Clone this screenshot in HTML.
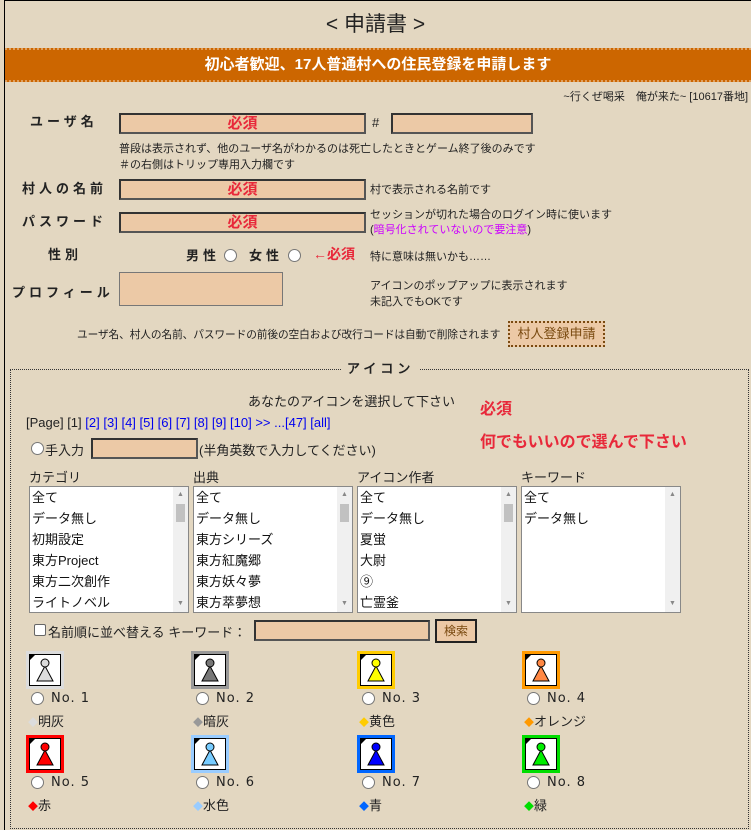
<!DOCTYPE html>
<html><head><meta charset="utf-8"><style>
*{box-sizing:border-box}
body{margin:0;width:751px;height:814px;overflow:hidden;background:#e3d7c1;font-family:"Liberation Sans","Noto Sans CJK JP",sans-serif;font-size:12px;color:#222;position:relative}
.a{position:absolute;white-space:nowrap}
.frame{position:absolute;left:4px;top:0;width:760px;height:830px;border-left:1px solid #000;border-top:1px solid #000}
.inp{position:absolute;background:#ecc9a6;border:2px solid #555;border-top-color:#333;border-left-color:#333}
.req{color:#e8283a;font-weight:bold;font-size:15px;text-align:center;line-height:16px}
.lbl{position:absolute;font-weight:bold;font-size:13px;letter-spacing:4px;font-family:"WenQuanYi Zen Hei","Noto Sans CJK JP",sans-serif}
.radio{position:absolute;width:13px;height:13px;border:1px solid #777;border-radius:50%;background:#fff}
.list{position:absolute;top:486px;width:160px;height:127px;background:#fff;border:1px solid #888;font-size:13px;line-height:21px;padding-left:2px;color:#111}
.sb{position:absolute;right:0;top:0;width:15px;height:125px;background:#f0f0f0}
.sb i{position:absolute;left:3px;top:17px;width:9px;height:18px;background:#c1c1c1}
.sb b{position:absolute;left:4px;font-size:7px;color:#888;font-weight:normal;line-height:8px}
a{color:#00e;}
.ic{position:absolute;width:38px;height:38px;border:3px solid}
.ic .w{position:absolute;left:0;top:0;width:32px;height:32px;background:#fff;border:1px solid #000}
.no{position:absolute;font-size:13px;font-family:"DejaVu Sans",sans-serif;letter-spacing:1px}
</style></head><body>
<div class="frame"></div>
<div class="a" style="left:0;width:751px;top:8px;text-align:center;font-size:21px;font-family:'WenQuanYi Zen Hei',sans-serif">&lt; 申請書 &gt;</div>
<div class="a" style="left:5px;width:746px;top:48px;height:34px;background:#cc6600;border-top:2px dotted #e0a060;border-bottom:2px dotted #e0a060;color:#fff;font-weight:bold;font-size:15px;text-align:center;line-height:30px">初心者歓迎、17人普通村への住民登録を申請します</div>
<div class="a" style="right:3px;top:88px;font-size:11px">~行くぜ喝采　俺が来た~ [10617番地]</div>

<div class="lbl" style="left:30px;top:111px">ユーザ名</div>
<div class="inp req" style="left:119px;top:113px;width:247px;height:21px;padding-top:1px">必須</div>
<div class="a" style="left:372px;top:115px;font-size:13px">#</div>
<div class="inp" style="left:391px;top:113px;width:142px;height:21px"></div>
<div class="a" style="left:119px;top:140px;font-size:11px">普段は表示されず、他のユーザ名がわかるのは死亡したときとゲーム終了後のみです</div>
<div class="a" style="left:119px;top:156px;font-size:11px">＃の右側はトリップ専用入力欄です</div>

<div class="lbl" style="left:22px;top:178px">村人の名前</div>
<div class="inp req" style="left:119px;top:179px;width:247px;height:21px;padding-top:1px">必須</div>
<div class="a" style="left:370px;top:181px;font-size:11px">村で表示される名前です</div>

<div class="lbl" style="left:22px;top:211px">パスワード</div>
<div class="inp req" style="left:119px;top:212px;width:247px;height:21px;padding-top:1px">必須</div>
<div class="a" style="left:370px;top:206px;font-size:11px">セッションが切れた場合のログイン時に使います</div>
<div class="a" style="left:370px;top:221px;font-size:11px">(<span style="color:#c0f">暗号化されていないので要注意</span>)</div>

<div class="lbl" style="left:48px;top:244px">性別</div>
<div class="lbl" style="left:186px;top:245px">男性</div>
<div class="radio" style="left:224px;top:249px"></div>
<div class="lbl" style="left:249px;top:245px">女性</div>
<div class="radio" style="left:288px;top:249px"></div>
<div class="a" style="left:313px;top:244px;color:#e8283a;font-weight:bold;font-size:14px">←必須</div>
<div class="a" style="left:370px;top:248px;font-size:11px">特に意味は無いかも……</div>

<div class="lbl" style="left:12px;top:282px">プロフィール</div>
<div class="inp" style="left:119px;top:272px;width:164px;height:34px;border:1px solid #777"></div>
<div class="a" style="left:370px;top:277px;font-size:11px">アイコンのポップアップに表示されます</div>
<div class="a" style="left:370px;top:293px;font-size:11px">未記入でもOKです</div>

<div class="a" style="left:77px;top:327px;font-size:10.7px;letter-spacing:-0.1px">ユーザ名、村人の名前、パスワードの前後の空白および改行コードは自動で削除されます</div>
<div class="a" style="left:508px;top:321px;width:97px;height:26px;background:#ecc9a6;border:2px dotted #7a4a10;color:#7a4a10;font-size:13px;text-align:center;line-height:22px">村人登録申請</div>

<div class="a" style="left:10px;top:369px;width:739px;height:460px;border:1px dotted #333"></div>
<div class="a" style="left:341px;top:358px;background:#e3d7c1;padding:0 6px;font-weight:bold;font-size:13px;letter-spacing:4px;font-family:'WenQuanYi Zen Hei',sans-serif">アイコン</div>

<div class="a" style="left:248px;top:391px;font-size:13px">あなたのアイコンを選択して下さい</div>
<div class="a" style="left:480px;top:395px;color:#e8283a;font-weight:bold;font-size:16px">必須</div>
<div class="a" style="left:26px;top:415px;font-size:13px">[Page] [1] <a>[2]</a> <a>[3]</a> <a>[4]</a> <a>[5]</a> <a>[6]</a> <a>[7]</a> <a>[8]</a> <a>[9]</a> <a>[10]</a> <a>&gt;&gt;</a> <a>...[47]</a> <a>[all]</a></div>
<div class="a" style="left:480px;top:428px;color:#e8283a;font-weight:bold;font-size:16px">何でもいいので選んで下さい</div>

<div class="radio" style="left:31px;top:442px"></div>
<div class="a" style="left:45px;top:440px;font-size:13px">手入力</div>
<div class="inp" style="left:91px;top:438px;width:107px;height:21px"></div>
<div class="a" style="left:199px;top:440px;font-size:13px">(半角英数で入力してください)</div>

<div class="a" style="left:29px;top:467px;font-size:13px">カテゴリ</div>
<div class="a" style="left:193px;top:467px;font-size:13px">出典</div>
<div class="a" style="left:357px;top:467px;font-size:13px">アイコン作者</div>
<div class="a" style="left:521px;top:467px;font-size:13px">キーワード</div>

<div class="list" style="left:29px">全て<br>データ無し<br>初期設定<br>東方Project<br>東方二次創作<br>ライトノベル<div class="sb"><b style="top:4px">▲</b><i></i><b style="top:113px">▼</b></div></div>
<div class="list" style="left:193px">全て<br>データ無し<br>東方シリーズ<br>東方紅魔郷<br>東方妖々夢<br>東方萃夢想<div class="sb"><b style="top:4px">▲</b><i></i><b style="top:113px">▼</b></div></div>
<div class="list" style="left:357px">全て<br>データ無し<br>夏蛍<br>大尉<br>⑨<br>亡霊釜<div class="sb"><b style="top:4px">▲</b><i></i><b style="top:113px">▼</b></div></div>
<div class="list" style="left:521px">全て<br>データ無し<div class="sb"><b style="top:4px">▲</b><b style="top:113px">▼</b></div></div>

<div class="a" style="left:34px;top:624px;width:12px;height:12px;border:1px solid #666;background:#fff;border-radius:2px"></div>
<div class="a" style="left:48px;top:622px;font-size:13px">名前順に並べ替える キーワード：</div>
<div class="inp" style="left:254px;top:620px;width:176px;height:21px"></div>
<div class="a" style="left:435px;top:619px;width:42px;height:24px;background:#ecc9a6;border:2px solid #222;color:#7a4a10;font-size:12px;text-align:center;line-height:20px">検索</div>

<div id="icons"></div>
<script>
var d=[[26,651,'#dcdcdc','#dcdcdc','No. 1','明灰'],[191,651,'#999','#777','No. 2','暗灰'],[357,651,'#fc0','#ff0','No. 3','黄色'],[522,651,'#f90','#f84','No. 4','オレンジ'],
[26,735,'#f00','#f00','No. 5','赤'],[191,735,'#9cf','#7cf','No. 6','水色'],[357,735,'#06f','#00f','No. 7','青'],[522,735,'#0d0','#0e0','No. 8','緑']];
var h='';
d.forEach(function(e){var x=e[0],y=e[1];
h+='<div class="ic" style="left:'+x+'px;top:'+y+'px;border-color:'+e[2]+'"><div class="w"><svg width="30" height="30" style="position:absolute;left:0;top:0"><path d="M0 0H5L0 5Z" fill="#000"/><path d="M15 11L7 26H23Z" fill="'+e[3]+'" stroke="#000"/><circle cx="15" cy="8" r="4" fill="'+e[3]+'" stroke="#000"/></svg></div></div>';
h+='<div class="radio" style="left:'+(x+5)+'px;top:'+(y+41)+'px"></div>';
h+='<div class="no" style="left:'+(x+25)+'px;top:'+(y+40)+'px">'+e[4]+'</div>';
h+='<div class="a" style="left:'+(x+2)+'px;top:'+(y+60)+'px;font-size:13px"><span style="color:'+e[2]+';font-size:10px">◆</span>'+e[5]+'</div>';});
document.getElementById('icons').innerHTML=h;
</script>
</body></html>
